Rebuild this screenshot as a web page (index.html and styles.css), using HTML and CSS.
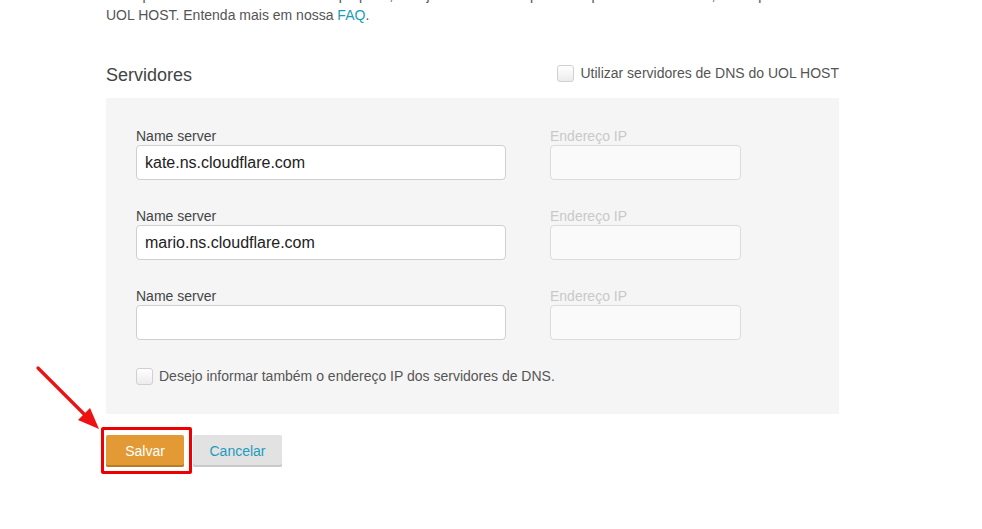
FILE: index.html
```html
<!DOCTYPE html>
<html lang="pt-BR">
<head>
    <meta charset="UTF-8">
    <title>Servidores DNS - UOL HOST</title>
    <link rel="stylesheet" href="styles.css">
</head>
<body>
    <div class="page">
        <!-- Intro text (scrolled partly out of view) -->
        <p class="intro">
            Caso prefira usar servidores de DNS próprios, eles já devem estar apontados para o seu domínio, e não para o<br>
            UOL HOST. Entenda mais em nossa <a href="#" class="link">FAQ</a>.
        </p>

        <!-- Header -->
        <div class="section-head">
            <h2 class="section-title">Servidores</h2>
            <label class="check check-top">
                <input type="checkbox">
                <span>Utilizar servidores de DNS do UOL HOST</span>
            </label>
        </div>

        <!-- Server fields -->
        <div class="panel">
            <div class="field-row">
                <div class="field field-name">
                    <label class="field-label">Name server</label>
                    <input class="text-input" type="text" value="kate.ns.cloudflare.com">
                </div>
                <div class="field field-ip">
                    <label class="field-label disabled">Endereço IP</label>
                    <input class="text-input" type="text" disabled>
                </div>
            </div>
            <div class="field-row">
                <div class="field field-name">
                    <label class="field-label">Name server</label>
                    <input class="text-input" type="text" value="mario.ns.cloudflare.com">
                </div>
                <div class="field field-ip">
                    <label class="field-label disabled">Endereço IP</label>
                    <input class="text-input" type="text" disabled>
                </div>
            </div>
            <div class="field-row">
                <div class="field field-name">
                    <label class="field-label">Name server</label>
                    <input class="text-input" type="text">
                </div>
                <div class="field field-ip">
                    <label class="field-label disabled">Endereço IP</label>
                    <input class="text-input" type="text" disabled>
                </div>
            </div>

            <label class="check check-ip">
                <input type="checkbox">
                <span>Desejo informar também o endereço IP dos servidores de DNS.</span>
            </label>
        </div>

        <!-- Actions -->
        <div class="actions">
            <div class="save-wrap">
                <button class="btn btn-save">Salvar</button>
                <span class="highlight"></span>
            </div>
            <button class="btn btn-cancel">Cancelar</button>
        </div>
    </div>

    <!-- Annotation arrow -->
    <svg class="arrow" width="110" height="440" viewBox="0 0 110 440">
        <line x1="38" y1="368" x2="88" y2="418" stroke="#ee1111" stroke-width="3.2" stroke-linecap="round"/>
        <polygon points="99,429 78,420 90,408" fill="#ee1111"/>
    </svg>
</body>
</html>
```

FILE: styles.css
```css
/* Basic reset */
* {
    margin: 0;
    padding: 0;
    box-sizing: border-box;
}

body {
    font-family: "Liberation Sans", Arial, sans-serif;
    background-color: #fff;
    color: #444;
    width: 982px;
    height: 529px;
    overflow: hidden;
    position: relative;
}

.page {
    width: 733px;
    margin-left: 106px;
}

/* Intro paragraph */
.intro {
    margin-top: -15px;
    font-size: 14px;
    line-height: 20px;
    color: #555;
    white-space: nowrap;
}

.link {
    color: #1b9cb8;
    text-decoration: none;
}

/* Section header */
.section-head {
    margin-top: 37px;
    height: 26px;
    display: flex;
    justify-content: space-between;
    align-items: center;
    margin-bottom: 10px;
}

.section-title {
    font-size: 18px;
    font-weight: normal;
    line-height: 26px;
    color: #444;
}

/* Checkboxes */
.check {
    display: flex;
    align-items: center;
    font-size: 14px;
    line-height: 18px;
    color: #555;
    cursor: pointer;
}

.check input {
    appearance: none;
    -webkit-appearance: none;
    width: 17px;
    height: 17px;
    margin-right: 6px;
    border: 1px solid #d0d0d0;
    border-radius: 3px;
    background: linear-gradient(#fff, #ececec);
}

.check-top {
    margin-bottom: 4px;
}

/* Gray panel */
.panel {
    background-color: #f5f5f5;
    padding: 29px 30px 29px;
}

.field-row {
    display: flex;
    gap: 44px;
    margin-bottom: 27px;
}

.field {
    display: flex;
    flex-direction: column;
}

.field-name {
    width: 370px;
}

.field-ip {
    width: 191px;
}

.field-label {
    font-size: 14px;
    line-height: 18px;
    color: #444;
}

.field-label.disabled {
    color: #c9c9c9;
}

.text-input {
    height: 35px;
    padding: 0 8px;
    border: 1px solid #cfcfcf;
    border-radius: 4px;
    background: #fff;
    font-family: "Liberation Sans", Arial, sans-serif;
    font-size: 16px;
    color: #222;
}

.text-input:disabled {
    background: #fafafa;
    border-color: #dcdcdc;
}

/* Buttons */
.actions {
    margin-top: 21px;
    display: flex;
    gap: 9px;
}

.save-wrap {
    position: relative;
}

.btn {
    height: 32px;
    border: none;
    border-radius: 2px;
    font-family: "Liberation Sans", Arial, sans-serif;
    font-size: 14px;
    cursor: pointer;
}

.btn-save {
    width: 78px;
    background-color: #e39a35;
    color: #fff;
    box-shadow: inset 0 -2px 0 #b97c27;
}

.btn-cancel {
    width: 89px;
    background-color: #e2e2e2;
    color: #1f9cbc;
    box-shadow: inset 0 -2px 0 #c9c9c9;
}

/* Red annotation box round the save button */
.highlight {
    position: absolute;
    left: -5px;
    top: -8px;
    right: -8px;
    bottom: -7px;
    border: 3px solid #ee0000;
    border-radius: 2px;
    pointer-events: none;
}

.arrow {
    position: absolute;
    left: 0;
    top: 0;
}
```
